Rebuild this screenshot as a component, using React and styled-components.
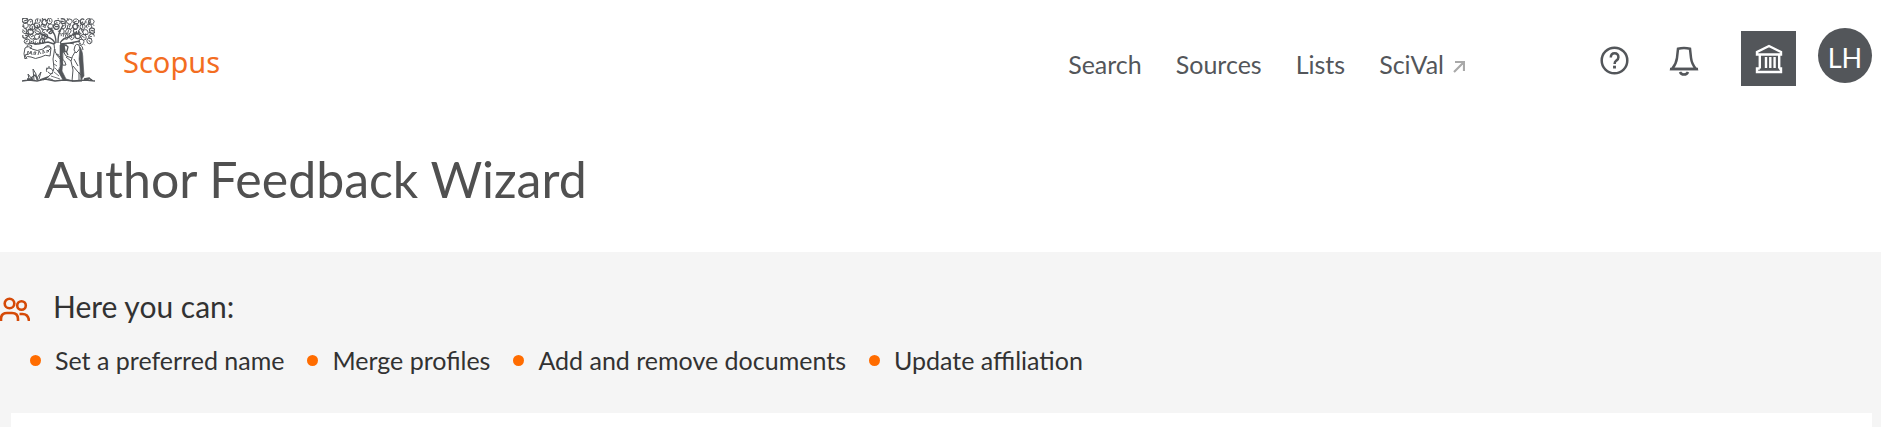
import React from 'react';
import styled, { createGlobalStyle } from 'styled-components';

const GlobalStyle = createGlobalStyle`
  body {
    margin: 0;
    background: #fff;
    font-family: Lato, 'Noto Sans', sans-serif;
    color: #323232;
  }
`

const navLinks = ['Search', 'Sources', 'Lists'];
const actions = [
  'Set a preferred name',
  'Merge profiles',
  'Add and remove documents',
  'Update affiliation',
];

// leaf clusters, centred on 0,0 and turned as they go along the crown
const leafShapes = [
  'M-3 0q0-3 3-3q3 0 3 3q-1 3-4 2zM-1 0l3-1',
  'M-3-2q3-2 5 1q0 3-2 4l-3-2zM-1 1l-2 2M2 2l1 1',
  'M-3 0q2-3 4-2l2 2q-2 4-4 2M-2 2l3-2M-3-2l1 1',
  'M-2 2q-2-3 1-4l3 1q2 3-1 4M0 1l-1-2M2-3l1 1',
];

// [y of the row, x of each leaf]
const crown = [
  [3, [3, 9, 16, 22, 28, 35, 41, 47, 54, 60, 66, 70]],
  [8, [4, 10, 15, 21, 29, 34, 42, 48, 53, 61, 67]],
  [13, [3, 8, 16, 22, 28, 40, 46, 54, 59, 64, 70]],
  [18, [4, 10, 15, 23, 44, 50, 55, 62, 69]],
  [23, [5, 13, 20, 60, 67]],
];

function TreeLogo() {
  return (
    <svg width="73" height="65" viewBox="0 0 73 65" fill="none" stroke="#53565a" strokeWidth="1" aria-hidden="true">
      {crown.map(([y, row], r) => row.map((x, i) => (
        <path
          key={`${x}-${y}`}
          d={leafShapes[(i * 3 + r) % 4]}
          strokeWidth={(i + r) % 3 ? 0.9 : 1.3}
          transform={`translate(${x} ${y + (i % 2)}) rotate(${(i * 67 + r * 41) % 360})`}
        />
      )))}
      {/* branches */}
      <path strokeWidth="1.4" d="M33 26q-1-5-8-7l-8-4M34 25q0-7-3-11l-5-5M36 25q0-8 2-12l3-6M38 25q3-5 9-6l8-5M7 25l9 1 10-2 6 2M38 26l10-1 10-2" />
      {/* trunk */}
      <path d="M32 26q1 5 0 9l-1 6 1 9q0 5-6 9l-5 3M35 52l4 5 3 5" />
      <path fill="#53565a" strokeWidth=".6" d="M38 27q2-2 5-1-3 7-2 15l-1 12 4 8 7 2-10-1-5-9q3-4 2-10z" />
      <path strokeWidth=".8" d="M33 42l2 2M32 46l3 2M33 50l3 3M32 54l5 4M29 58l9 3M26 60l5 2M35 36l2 1" />
      {/* scroll with motto */}
      <path d="M3 30q4-3 7 1 5 3 11 0 5-4 8-1l-1 8q-5-2-9 1-6 3-10 0-4-2-6 2-2-5 0-11zM5 29q0-4 5-1l-2 3M22 30q5-5 7 0l-3 3M5 41l-2-4 4-1" />
      <path strokeWidth=".9" d="M5 37l1-4 2 3 1-3 1 4M12 37v-3h2l-1 3M16 37l1-4 2 3M21 36v-4l2 3M25 35v-3l2 2" />
      {/* vine round the trunk */}
      <path d="M33 31q-1 4 5 8 6 4 6 8-3 1-5-1M34 36l5 6 2 5" />
      {/* arch over the figure */}
      <path d="M43 26q5-2 9 0M58 27q3 1 3 5" />
      {/* standing figure */}
      <path fill="#53565a" strokeWidth=".6" d="M58 29q3 4 3 14l1 15-3 4q-1-6-1-13l-1-8z" />
      <path d="M53 28q1-3 4-1 2 4-1 6l-2 2-2-3zM53 34q-3 4-4 9l2 9-1 11M50 40l-6-2-3-5M49 43l-5-4M51 48l5 6 4 4M52 41l4 7M50 63h10M57 54v8" />
      <path strokeWidth="1.3" d="M41 29l3-2 2 2-1 4-3 1zM42 28l1 5M44 33l2 4" />
      {/* plants and ground */}
      <path d="M25 54q-2-4 2-4 3 0 4 3M26 54q2 3 5 1M24 50l2 1M27 50v-2M12 62l-1-11 3 5 1 6M10 61l-4-5 1 5M15 60l4-6-2 7" />
      <path strokeWidth="1.4" d="M0 63l7-1 8 1 8-2 10 2 9-1 10 1 11-1 10 1M9 60l4-3 3 5M5 61h6M62 61l5-1 4 3M18 62l8-3M64 62l4-2" />
    </svg>
  );
}

function HelpIcon() {
  return (
    <svg width="30" height="30" viewBox="0 0 30 30" fill="none" stroke="#53565a" strokeWidth="2.5" aria-hidden="true">
      <circle cx="14.5" cy="14.5" r="12.8" />
      <path d="M10.800 11.500q0-4.200 3.800-4.200t3.800 3.900q0 2-2.100 3.400-1.700 1.200-1.700 3.400" />
      <path d="M14.500 19.700v2.800" strokeWidth="2.9" />
    </svg>
  );
}

function BellIcon() {
  return (
    <svg width="30" height="30" viewBox="0 0 30 30" fill="none" stroke="#53565a" strokeWidth="2.5" aria-hidden="true">
      <path d="M9 2.800q6-1.800 12 0l1 9q.7 6 5 11.200H3q4.300-5.200 5-11.200z" />
      <path d="M1 23h28" />
      <path d="M11 26q1 2.600 4 2.600t4-2.600" />
    </svg>
  );
}

function InstitutionIcon() {
  return (
    <svg width="28" height="30" viewBox="0 0 28 30" fill="none" stroke="#fff" strokeWidth="2.400" aria-hidden="true">
      <path d="M2 10.500V8l12-6 12 6v2.500zM4.800 11v13.500M11 13v11M15.300 13v11M19.600 13v11M24.200 11v13.500M4.800 24.500H2v3.500h24v-3.500h-2" />
    </svg>
  );
}

function PeopleIcon() {
  return (
    <svg width="30" height="24" viewBox="0 0 30 24" fill="none" stroke="#d54a08" strokeWidth="2.600" aria-hidden="true">
      <circle cx="9.500" cy="6.500" r="4.800" />
      <circle cx="21.500" cy="8.500" r="4.300" />
      <path d="M1 24v-2q0-6 6-6h5q6 0 6 6v2M19.500 17h3q6 0 6.500 7" />
    </svg>
  );
}

const Header = styled.header`
  display: flex;
  align-items: flex-start;
  padding: 18px 9px 16px 22px;
`

const Brand = styled.a`
  display: flex;
  align-items: center;
  gap: 28px;
  color: #f36d21;
  font-family: 'Noto Sans', sans-serif;
  font-size: 29px;
  line-height: 36px;
  text-decoration: none;

  span {
    padding-top: 22px;
  }
`

const Nav = styled.nav`
  display: flex;
  gap: 34px;
  margin-left: auto;
  padding-top: 30px;
`

const NavLink = styled.a`
  display: flex;
  align-items: center;
  gap: 9px;
  color: #53565a;
  font-size: 25px;
  line-height: 32px;
  text-decoration: none;

  svg {
    margin-top: 4px;
  }
`

const Tools = styled.div`
  display: flex;
  align-items: flex-start;
  padding-top: 10px;
  margin-left: 135px;
`

const IconButton = styled.button`
  display: flex;
  margin: 18px 39px 0 0;
  padding: 0;
  border: 0;
  background: transparent;
`

const InstitutionButton = styled.button`
  display: flex;
  align-items: center;
  justify-content: center;
  width: 55px;
  height: 55px;
  margin: 3px 22px 0 3px;
  padding: 0;
  border: 0;
  background: #53565a;
`

const Avatar = styled.button`
  width: 54px;
  height: 55px;
  padding: 4px 0 0;
  border: 0;
  border-radius: 50%;
  background: #53565a;
  color: #fff;
  font-family: inherit;
  font-size: 27px;
`

const PageTitle = styled.h1`
  margin: 0;
  padding: 46px 44px 42px;
  color: #505050;
  font-size: 50px;
  font-weight: 400;
  line-height: 62px;
`

const Wizard = styled.main`
  background: #f5f5f5;
  padding-top: 34px;
`

const IntroHeading = styled.h2`
  display: flex;
  align-items: center;
  gap: 23px;
  margin: 0;
  font-size: 30px;
  font-weight: 400;
  line-height: 40px;

  svg {
    margin-top: 6px;
  }
`

const ActionList = styled.ul`
  display: flex;
  flex-wrap: wrap;
  gap: 23px;
  margin: 0;
  padding: 17px 30px 36px;
  list-style: none;
`

const Action = styled.li`
  display: flex;
  align-items: center;
  gap: 14px;
  font-size: 25px;
  line-height: 34px;

  &::before {
    content: '';
    width: 11px;
    height: 11px;
    border-radius: 50%;
    background: #ff6c00;
  }
`

const Panel = styled.section`
  min-height: 14px;
  margin: 0 9px 0 11px;
  background: #fff;
`

function App() {
  return (
    <>
      <GlobalStyle />
      <Header>
        <Brand href="#">
          <TreeLogo />
          <span>Scopus</span>
        </Brand>
        <Nav>
          {navLinks.map((link) => <NavLink href="#" key={link}>{link}</NavLink>)}
          <NavLink href="#">
            SciVal
            <svg width="12" height="14" viewBox="0 0 12 14" fill="none" stroke="#a9a9a9" strokeWidth="2.200" aria-hidden="true">
              <path d="M1 13L10.500 3.500M2 3h9v9" />
            </svg>
          </NavLink>
        </Nav>
        <Tools>
          <IconButton aria-label="Help"><HelpIcon /></IconButton>
          <IconButton aria-label="Notifications"><BellIcon /></IconButton>
          <InstitutionButton aria-label="Institution"><InstitutionIcon /></InstitutionButton>
          <Avatar>LH</Avatar>
        </Tools>
      </Header>
      <PageTitle>Author Feedback Wizard</PageTitle>
      <Wizard>
        <IntroHeading>
          <PeopleIcon />
          Here you can:
        </IntroHeading>
        <ActionList>
          {actions.map((action) => <Action key={action}>{action}</Action>)}
        </ActionList>
        <Panel />
      </Wizard>
    </>
  );
}

export default App;
